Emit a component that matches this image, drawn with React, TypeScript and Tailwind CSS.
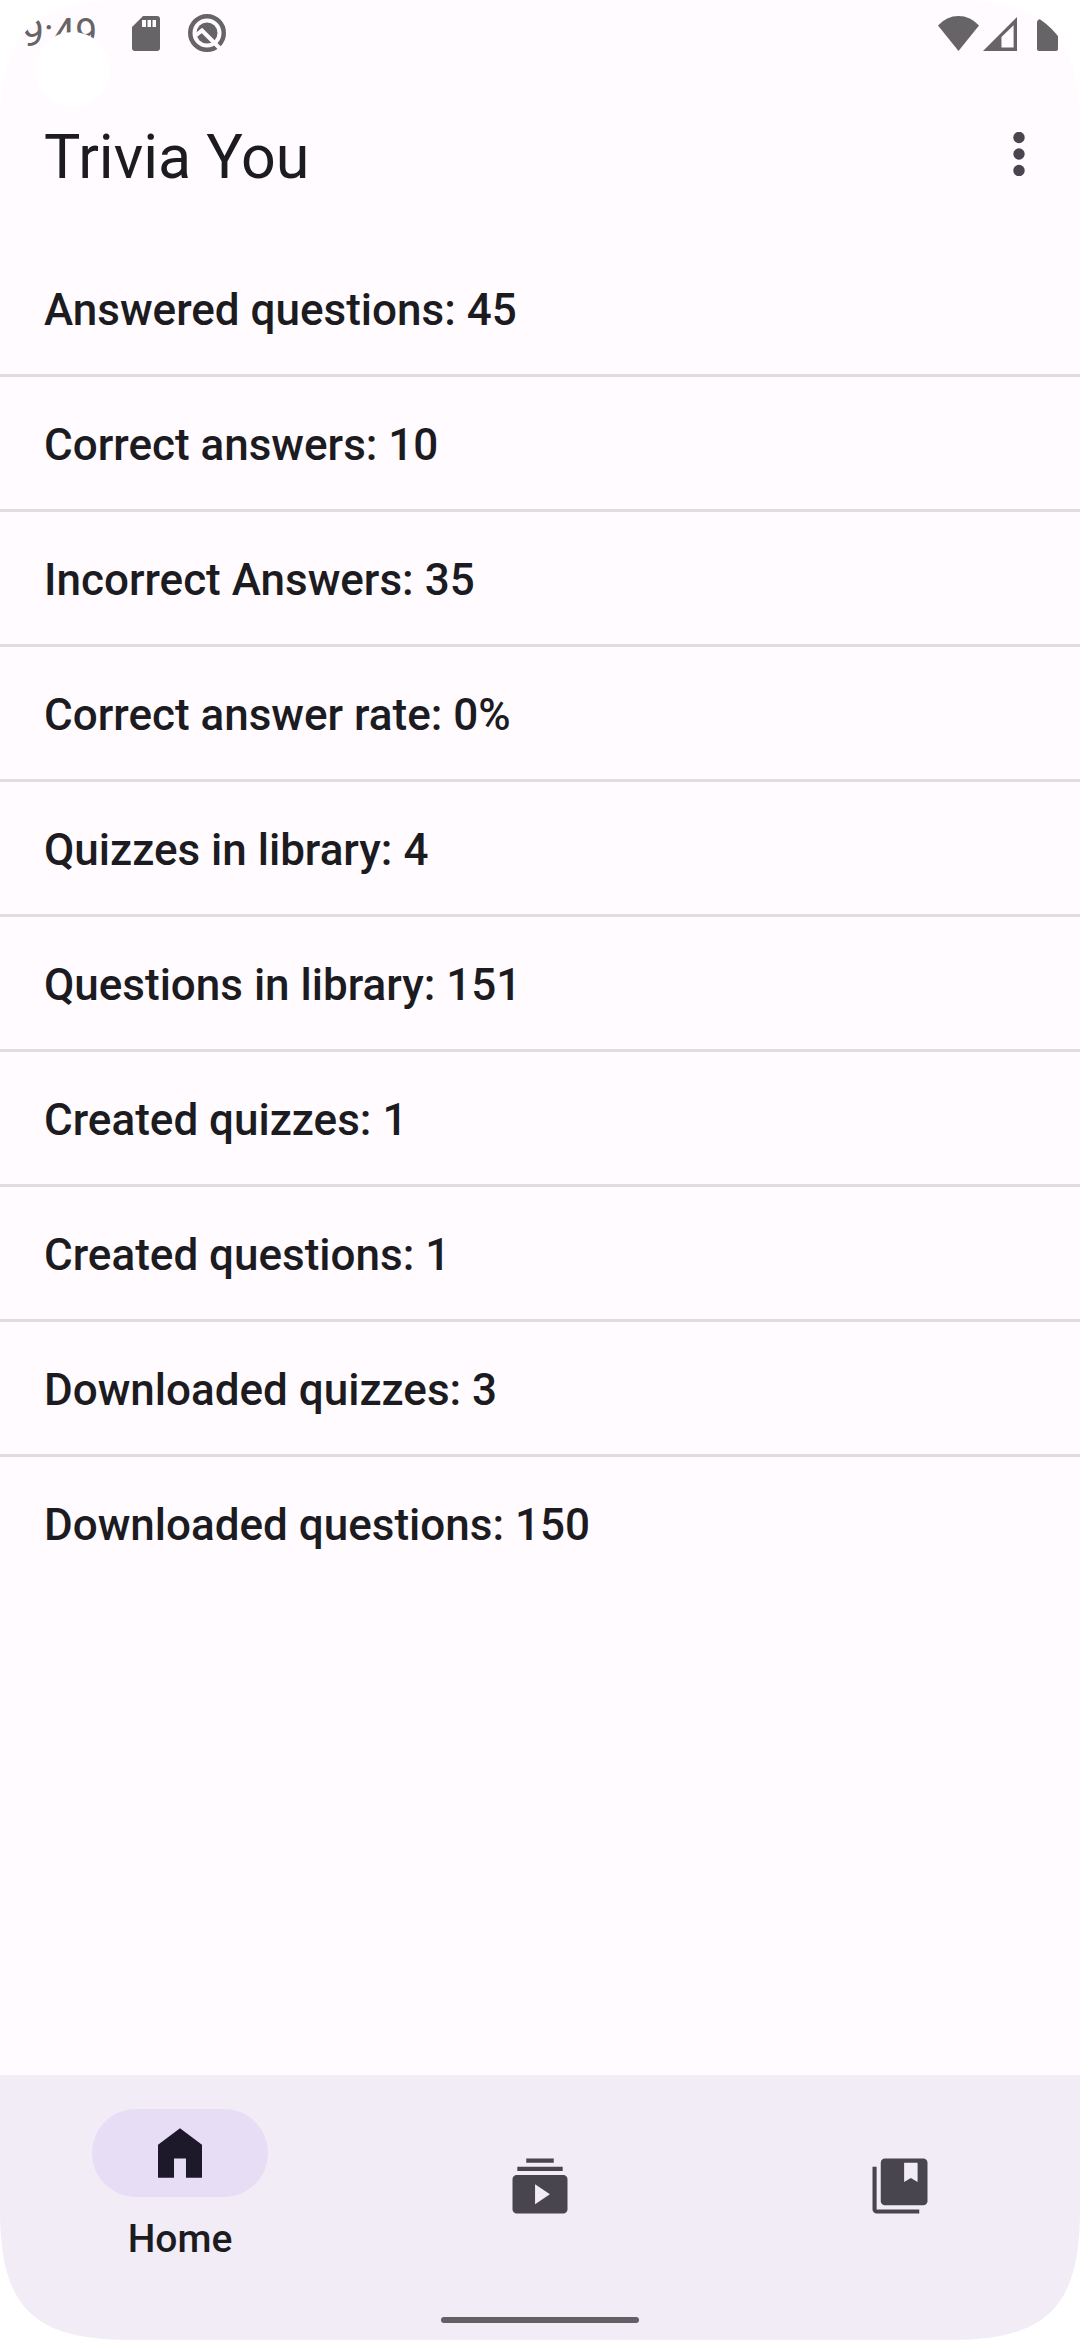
import React from "react";

const stats = [
  ["Answered questions", "45"],
  ["Correct answers", "10"],
  ["Incorrect Answers", "35"],
  ["Correct answer rate", "0%"],
  ["Quizzes in library", "4"],
  ["Questions in library", "151"],
  ["Created quizzes", "1"],
  ["Created questions", "1"],
  ["Downloaded quizzes", "3"],
  ["Downloaded questions", "150"],
];

function Corner({ className }: { className: string }) {
  return (
    <svg aria-hidden="true" viewBox="0 0 130 130" className={`pointer-events-none absolute size-[130px] fill-white ${className}`}>
      <path d="M0 0H130C33 0 0 33 0 130Z" />
    </svg>
  );
}

function StatusBar() {
  return (
    <div className="relative flex h-[66px] items-center justify-between px-[22px] text-[#666466]">
      <div className="flex items-center">
        <span className="w-[74px] text-[39px] leading-none">9:49</span>
        <svg viewBox="0 0 28 35" className="ml-9 h-[35px] w-[28px] fill-current">
          <path fillRule="evenodd" d="M11 0H25Q28 0 28 3V32Q28 35 25 35H3Q0 35 0 32V11ZM10 4V11H14V4ZM15.500 4V11H19V4ZM20.500 4V11H24V4Z" />
        </svg>
        <svg viewBox="0 0 38 38" className="ml-7 size-[38px]" fill="none">
          <circle cx="19" cy="19" r="16.750" stroke="currentColor" strokeWidth="4.500" />
          <circle cx="19" cy="19" r="10.500" fill="currentColor" />
          <path d="M7 22L14 16.500L33 35.500" stroke="#fffbff" strokeWidth="4" />
        </svg>
      </div>
      <div className="flex items-end">
        <svg viewBox="0 0 41 35" className="h-[35px] w-[41px] fill-current">
          <path d="M0 9.500Q8.500 0 20.500 0T41 9.500L20.500 35Z" />
        </svg>
        <svg viewBox="0 0 35 35" className="ml-1 size-[34px] fill-current">
          <path fillRule="evenodd" d="M35 0V35H0ZM31.500 8.500L19 20.500V31.500H31.500Z" />
        </svg>
        <svg viewBox="0 0 21 32" className="ml-5 h-[32px] w-[21px] fill-current">
          <path d="M3 0H4L7 2Q14 7 21 15V30Q21 32 19 32H2Q0 32 0 30V3Q0 1 3 0Z" />
        </svg>
      </div>
      <span className="absolute left-[35px] top-[32px] size-[75px] rounded-full bg-white" />
    </div>
  );
}

export default function App() {
  return (
    <div className="relative flex min-h-screen flex-col overflow-hidden bg-[#fffbff] font-['Roboto',sans-serif] text-[#1c1b1f]">
      <StatusBar />
      <header className="flex h-[176px] items-start justify-between pl-[44px] pr-[6px]">
        <h1 className="mt-[55px] text-[61px] leading-[72px]">Trivia You</h1>
        <button aria-label="More options" className="mt-[33px] flex size-[110px] items-center justify-center">
          <svg viewBox="0 0 12 44" className="h-[44px] w-[12px] fill-[#49454f]">
            <circle cx="6" cy="5.500" r="5.700" />
            <circle cx="6" cy="22" r="5.700" />
            <circle cx="6" cy="38.500" r="5.700" />
          </svg>
        </button>
      </header>
      <main className="flex-1">
        <ul className="divide-y-3 divide-[#dfdddf]">
          {stats.map(([label, value]) => (
            <li key={label} className="px-[44px] pb-[38px] pt-[42px] text-[44px] font-medium leading-[52px]">
              {label}: {value}
            </li>
          ))}
        </ul>
      </main>
      <nav className="flex h-[265px] flex-col bg-[#f1ecf6]">
        <div className="grid h-[222px] grid-cols-3">
          <button aria-current="page" className="flex flex-col items-center pt-[34px]">
            <span className="flex h-[88px] w-[176px] items-center justify-center rounded-full bg-[#e7def6]">
              <svg viewBox="0 0 24 24" className="size-[66px] fill-[#1d192b]">
                <path d="M4 21V9l8-6 8 6v12h-5.825v-7h-4.350v7Z" />
              </svg>
            </span>
            <span className="mt-5 text-[39px] font-medium leading-[44px]">Home</span>
          </button>
          <button aria-label="Quizzes" className="flex items-center justify-center">
            <svg viewBox="0 0 24 24" className="size-[66px] fill-[#49454f]">
              <path fillRule="evenodd" d="M3.500 22q-.600 0-1.050-.450Q2 21.100 2 20.500V9.500q0-.600.450-1.050Q2.900 8 3.500 8h17q.600 0 1.050.450.450.450.450 1.050v11q0 .600-.450 1.050-.450.450-1.050.450ZM10.200 18.650l5.400-3.650-5.400-3.650ZM3.750 6.500V5h16.500v1.500ZM7 3.500V2h10v1.500Z" />
            </svg>
          </button>
          <button aria-label="Library" className="flex items-center justify-center">
            <svg viewBox="0 0 24 24" className="size-[66px] fill-[#49454f]">
              <path fillRule="evenodd" d="M13.500 3.500v7l2.450-1.450 2.450 1.450v-7ZM6.500 19q-.600 0-1.050-.450Q5 18.100 5 17.500v-14q0-.600.450-1.050Q5.900 2 6.500 2h14q.600 0 1.050.450.450.450.450 1.050v14q0 .600-.450 1.050-.450.450-1.050.450ZM3.500 22q-.600 0-1.050-.450Q2 21.100 2 20.500V5h1.500v15.500H19V22Z" />
            </svg>
          </button>
        </div>
        <div className="mx-auto mt-5 h-[6px] w-[198px] rounded-full bg-[#636065]" />
      </nav>
      <Corner className="left-0 top-0" />
      <Corner className="right-0 top-0 rotate-90" />
      <Corner className="bottom-0 right-0 rotate-180" />
      <Corner className="bottom-0 left-0 -rotate-90" />
    </div>
  );
}
